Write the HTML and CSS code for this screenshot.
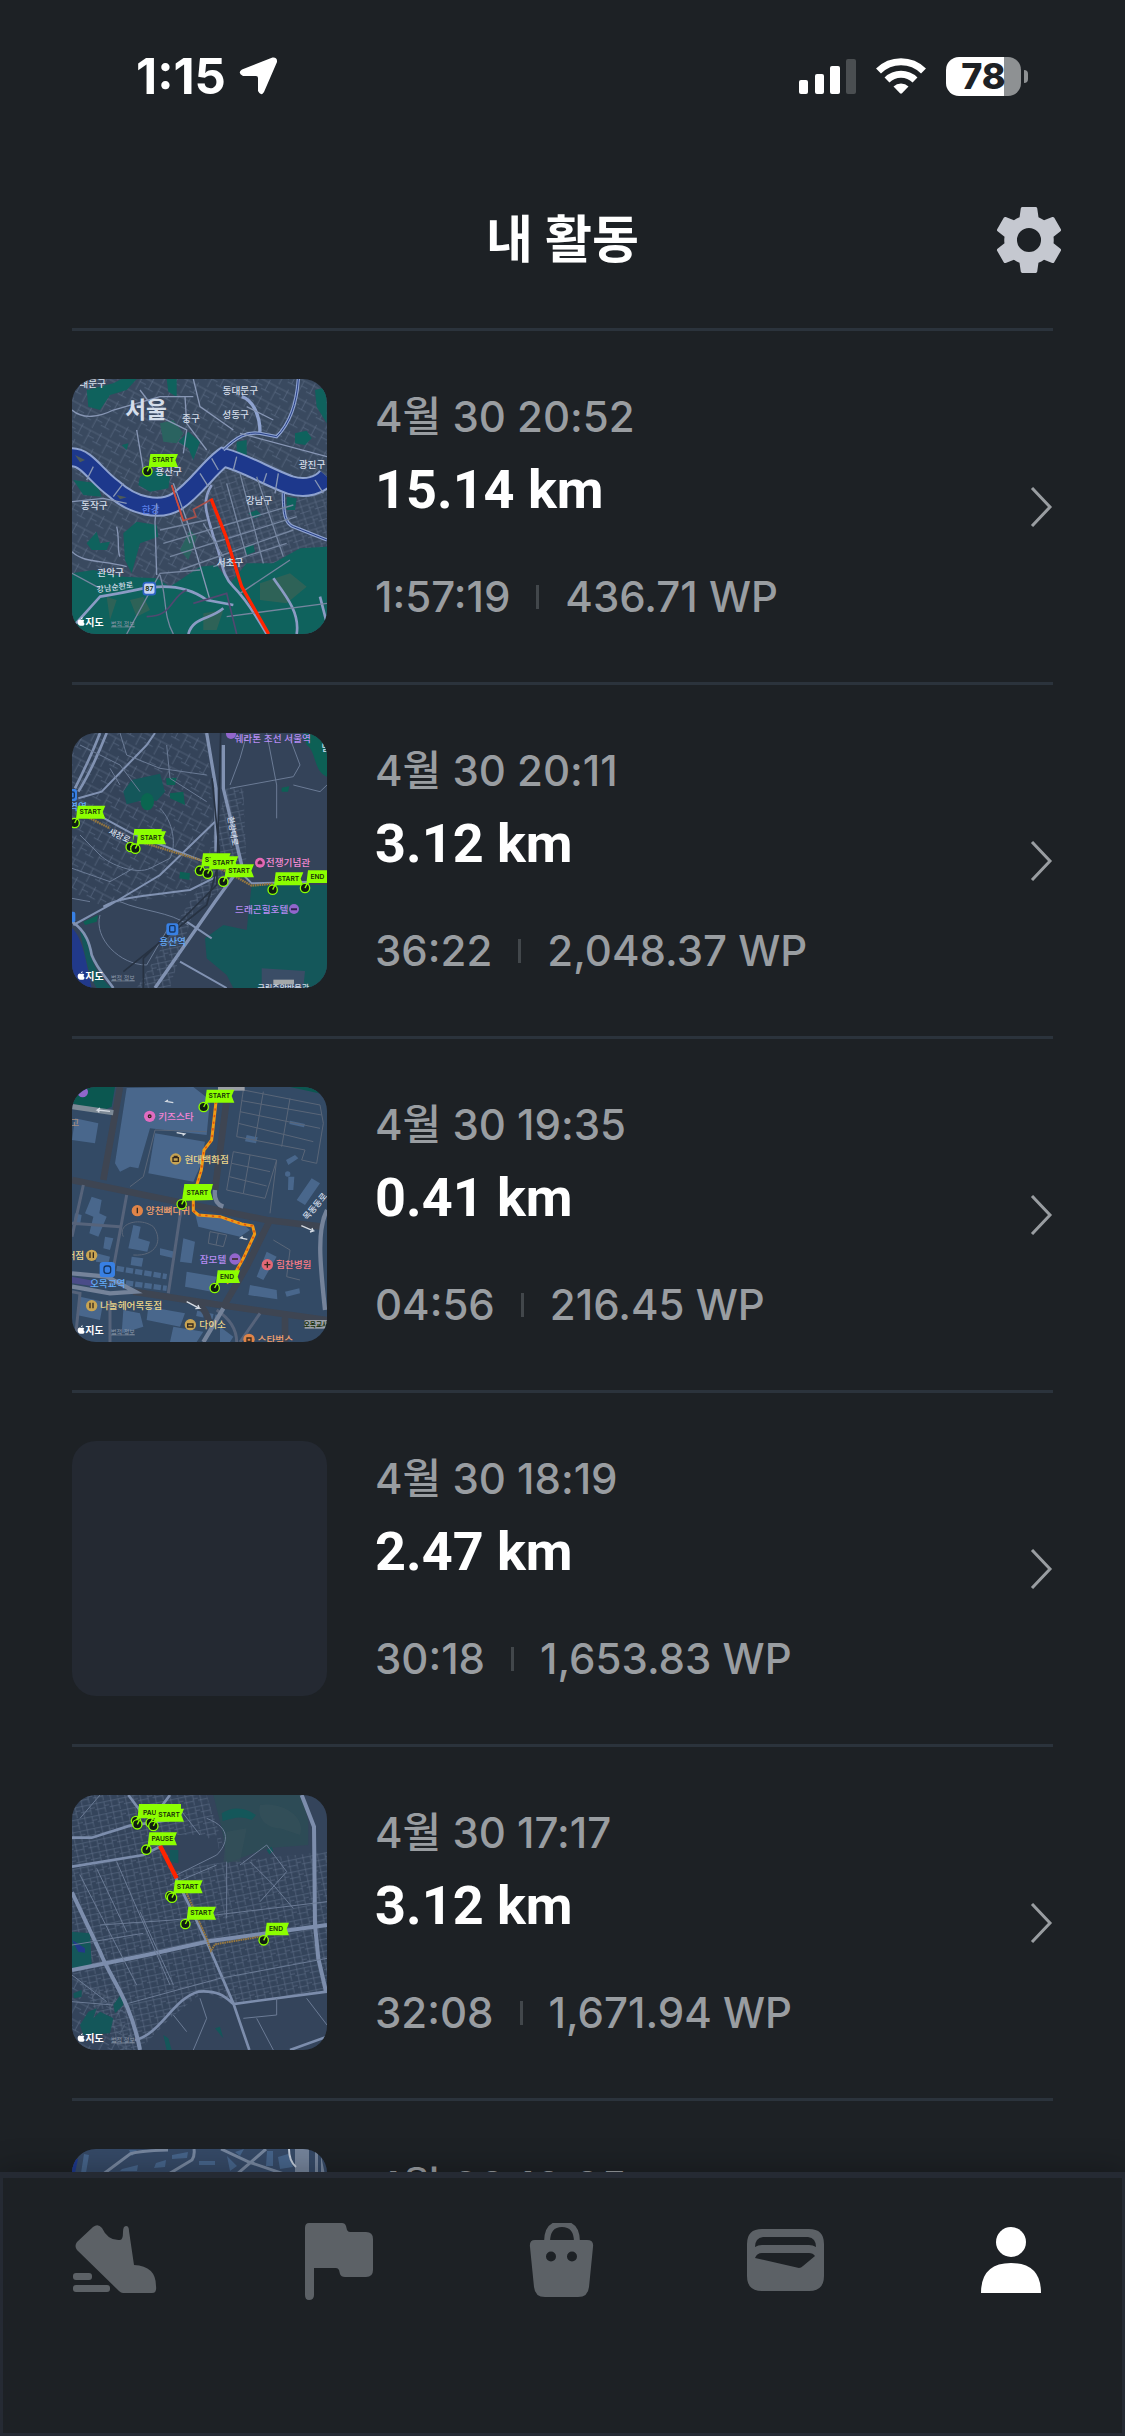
FILE: index.html
```html
<!DOCTYPE html>
<html lang="ko">
<head>
  <meta charset="UTF-8" />
  <title>내 활동</title>
  <meta name="viewport" content="width=device-width, initial-scale=1.0" />
  <link rel="stylesheet" href="styles.css">
</head>

<body>
  <!-- Shared map parts -->
  <svg class="defs" width="0" height="0" aria-hidden="true">
    <defs>
      <pattern id="streets" width="46" height="38" patternUnits="userSpaceOnUse" patternTransform="rotate(-18)">
        <path d="M0 6H46M0 25H30M9 0V38M32 6V38M32 17H46" class="street" />
      </pattern>
      <pattern id="streetsSteep" width="62" height="54" patternUnits="userSpaceOnUse" patternTransform="rotate(28)">
        <path d="M0 9H62M0 35H28M13 0V35M42 9V54M42 26H62" class="street" />
      </pattern>
      <pattern id="streetsFine" width="44" height="36" patternUnits="userSpaceOnUse" patternTransform="rotate(-12)">
        <path d="M0 5H44M0 23H30M8 0V36M30 5V36M30 16H44" class="street" />
      </pattern>
      <g id="pin">
        <circle r="14" fill="#101c12" stroke="#8cff00" stroke-width="4" />
        <path d="M0 0L6 -12" stroke="#8cff00" stroke-width="4" />
      </g>
      <g id="flag-start">
        <path d="M3 -6L9 -52H92L84 -33L92 -13H12L7 -4Z" fill="#8cff00" />
        <text x="47" y="-27" class="flag-text">START</text>
        <use href="#pin" />
      </g>
      <g id="flag-pause">
        <path d="M3 -6L9 -52H92L84 -33L92 -13H12L7 -4Z" fill="#8cff00" />
        <text x="48" y="-27" class="flag-text">PAUSE</text>
        <use href="#pin" />
      </g>
      <g id="flag-end">
        <path d="M3 -6L9 -53H76L69 -34L76 -15H12L7 -4Z" fill="#8cff00" />
        <text x="37" y="-28" class="flag-text">END</text>
        <use href="#pin" />
      </g>
      <g id="credit">
        <path d="M10 -15C4 -19 -1 -15 -1 -8C-1 -1 4 4 10 2C16 4 19 0 20 -4C16 -6 16 -11 19 -14C16 -17 13 -16 10 -15ZM9 -17C9 -21 12 -23 14 -23C14 -20 12 -17 9 -17Z" fill="#fff" />
        <text x="22" y="3" class="credit">지도</text>
        <text x="99" y="2" class="legal">법적 정보</text>
      </g>
    </defs>
  </svg>

  <div class="app">
    <!-- Status bar -->
    <div class="status-bar">
      <div class="status-time">
        <span>1:15</span>
        <svg width="40" height="40" viewBox="0 0 40 40"><path d="M34.500 1.500Q39.500 1 39 6L26 36Q23 41 20 35V22Q20 20 18 20H5Q-1 17 4 13.500Z" fill="#fff" /></svg>
      </div>
      <div class="status-icons">
        <svg width="57" height="36" viewBox="0 0 57 36" fill="#fff">
          <rect x="0" y="22" width="9" height="14" rx="2" />
          <rect x="16" y="16" width="9" height="20" rx="2" />
          <rect x="31" y="8" width="10" height="28" rx="2" />
          <rect x="47" y="1" width="10" height="35" rx="2" fill="#4a4e51" />
        </svg>
        <svg width="50" height="36" viewBox="0 0 50 36">
          <path d="M2.500 13.500A32 32 0 0 1 47.500 13.500" fill="none" stroke="#fff" stroke-width="7" transform="translate(0 -.5)" />
          <path d="M11 22A20 20 0 0 1 39 22" fill="none" stroke="#fff" stroke-width="7" />
          <path d="M17.500 28.500A11 11 0 0 1 32.500 28.500L26 35.300Q25 36 24 35.300Z" fill="#fff" />
        </svg>
        <div class="battery"><span>78</span></div>
      </div>
    </div>

    <!-- Header -->
    <header class="header">
      <h1>내 활동</h1>
      <button class="settings" type="button" aria-label="설정">
        <svg width="66" height="66" viewBox="2.4 2.4 19.2 19.2" fill="#c5c8d0">
          <path d="M19.140 12.940c.04-.3.06-.61.06-.94 0-.32-.02-.64-.07-.94l2.030-1.580c.18-.14.23-.41.12-.61l-1.920-3.320c-.12-.22-.37-.29-.59-.22l-2.390.96c-.5-.38-1.030-.7-1.620-.94l-.36-2.540c-.04-.24-.24-.41-.48-.41h-3.840c-.24 0-.43.17-.47.41l-.36 2.540c-.59.24-1.130.57-1.620.94l-2.390-.96c-.22-.08-.47 0-.59.22l-1.910 3.320c-.12.21-.08.47.12.61l2.030 1.580c-.05.3-.09.63-.09.94s.02.64.07.94l-2.030 1.580c-.18.14-.23.41-.12.61l1.920 3.320c.12.22.37.29.59.22l2.390-.96c.5.38 1.030.7 1.620.94l.36 2.540c.05.24.24.41.48.41h3.840c.24 0 .44-.17.47-.41l.36-2.540c.59-.24 1.130-.56 1.620-.94l2.390.96c.22.08.47 0 .59-.22l1.920-3.320c.12-.22.07-.47-.12-.61l-2.010-1.580zM12 15.500A3.500 3.500 0 1 1 12 8.500a3.500 3.500 0 0 1 0 7z" />
        </svg>
      </button>
    </header>

    <!-- Activity list -->
    <main class="activities">
      <a class="activity" href="#">
        <svg class="thumb" viewBox="36 27 765 765" role="img" aria-label="서울 지도">
          <rect x="36" y="27" width="765" height="765" fill="#39495f" />
          <rect x="36" y="27" width="765" height="765" fill="url(#streetsSteep)" />
          <path d="M470 300L800 370V560L520 700L440 480Z" fill="#39495f" />
          <path d="M470 300L800 370V560L520 700L440 480Z" fill="url(#streets)" />
          <g fill="#0f625d">
            <path d="M36 610L100 600L190 620L290 625L330 650L420 590L470 585L510 640L560 580L640 580L720 535L801 530V792H36Z" />
            <path d="M80 60L160 40L185 27H230L200 60L150 75L120 120L85 110Z" />
            <path d="M300 160L340 150L370 190L350 220L310 215Z" fill="#2a6360" />
            <path d="M355 215L385 185L420 215L400 270L385 235Z" />
            <path d="M240 320L290 300L330 320L325 355L270 365L235 345Z" />
            <path d="M190 490L230 455L290 465L295 500L240 520L215 610L195 570Z" />
            <path d="M360 540L390 480L410 500L385 570Z" fill="#2a6360" />
            <path d="M80 520L110 485L120 520L150 515L140 540L95 540Z" />
            <path d="M705 190L740 182L755 205L735 225L705 220Z" />
            <path d="M680 380L710 385L705 420L680 420ZM765 60L800 50V160L770 110ZM530 215L560 210V260L530 245ZM565 430L590 420L605 435L585 445ZM555 530L580 525L585 545L560 555ZM320 27H350V80L325 65ZM185 225L205 220L200 240ZM40 330L110 340L125 380L70 375Z" />
            <path d="M600 640L690 610L740 650L680 700L600 690ZM140 680L170 690L150 750ZM430 730L490 720L470 780L430 780ZM210 690L250 680L270 720L230 740Z" fill="#3c6355" opacity=".7" />
          </g>
          <!-- River -->
          <path d="M36 262C80 262 110 320 160 355C220 410 300 425 350 395C410 355 440 300 490 262C560 280 620 320 690 345C740 360 780 345 801 320" fill="none" stroke="#8ea2cf" stroke-width="60" />
          <path d="M36 262C80 262 110 320 160 355C220 410 300 425 350 395C410 355 440 300 490 262C560 280 620 320 690 345C740 360 780 345 801 320" fill="none" stroke="#1d388c" stroke-width="48" />
          <path d="M490 240C530 200 560 185 600 190L650 200C690 160 710 100 715 27M670 370C670 430 675 460 700 470L801 510M600 185C600 140 580 90 545 80" fill="none" stroke="#8ea2cf" stroke-width="10" />
          <path d="M490 240C530 200 560 185 600 190L650 200C690 160 710 100 715 27M670 370C670 430 675 460 700 470L801 510" fill="none" stroke="#263f86" stroke-width="3" />
          <path d="M45 255L75 270L60 277ZM170 375L200 382L180 388Z" fill="#4d5a58" />
          <g fill="none" stroke="#8796b4" stroke-width="5">
            <path d="M36 395L130 385L200 400M100 290L80 330M190 340L160 380M290 400L285 455L290 615M340 340L380 450L450 690M420 310L445 350M455 265L475 300M530 260L520 300M620 310L610 340M655 310L645 370M765 330L790 370M230 180L250 300M36 120C70 150 120 140 160 120L300 80H400M240 60L300 140L380 180L370 250M400 27L420 110L520 180M375 80L380 160L440 240M540 190L801 260M560 110L640 150M36 545C70 580 130 570 200 590M170 470C180 510 170 540 180 560" stroke-width="4" />
            <path d="M455 345C420 400 445 440 460 500C490 570 480 610 520 650C560 690 590 740 620 792M48 760L120 680Q180 670 250 655C340 640 400 660 440 690L520 705M640 625C680 680 720 730 710 792M385 792C400 740 450 750 490 715M780 680L798 750" stroke-width="8" stroke="#8b9bc4" />
            <path d="M300 480L440 450M310 520L700 405M330 560L710 440M360 600L700 480M460 590L680 520M360 440L390 520M430 460L490 560M540 310L610 580M590 320L670 560M500 340L560 560M540 670L690 570M200 792L300 610L420 600M300 615C320 680 310 740 340 792M500 740L801 700M120 655L36 610" stroke-width="4" stroke="#75859f" />
            <path d="M380 660C330 680 340 740 260 740M400 700L500 670L530 792" stroke="#514870" stroke-width="5" />
          </g>
          <path d="M335 345L370 452L408 440L400 418L455 388" fill="none" stroke="#a8504a" stroke-width="5" />
          <path d="M335 345L370 452" stroke="#cf4a3c" stroke-width="5" />
          <path d="M453 386L498 500L545 650L626 792" fill="none" stroke="#ff2400" stroke-width="10" />
          <text x="258" y="145" class="label city">서울</text>
          <g class="label">
            <text x="98" y="50">대문구</text>
            <text x="541" y="72">동대문구</text>
            <text x="393" y="156">중구</text>
            <text x="527" y="144">성동구</text>
            <text x="756" y="293">광진구</text>
            <text x="326" y="314">용산구</text>
            <text x="103" y="418">동작구</text>
            <text x="597" y="402">강남구</text>
            <text x="510" y="587">서초구</text>
            <text x="152" y="617">관악구</text>
            <text x="166" y="660" font-size="24" transform="rotate(-8 166 660)">강남순환로</text>
            <text x="272" y="428" fill="#5c80e8">한강</text>
          </g>
          <rect x="250" y="638" width="36" height="36" rx="8" fill="#c4d4f4" stroke="#2c62c4" stroke-width="5" />
          <text x="268" y="664" class="flag-text">87</text>
          <use href="#flag-start" x="262" y="304" />
          <use href="#credit" x="54" y="765" />
        </svg>
        <div class="info">
          <time class="date">4월 30 20:52</time>
          <strong class="distance">15.14 km</strong>
          <p class="stats"><span>1:57:19</span><i></i><span>436.71 WP</span></p>
        </div>
        <svg class="chevron" viewBox="0 0 24 40"><path d="M3 1L21 20L3 39" /></svg>
      </a>

      <a class="activity" href="#">
        <svg class="thumb" viewBox="36 24 765 765" role="img" aria-label="용산 지도">
          <rect x="36" y="24" width="765" height="765" fill="#344359" />
          <path d="M36 24H440L460 290L380 510L120 540L36 500Z" fill="url(#streetsSteep)" />
          <path d="M500 190L550 190L560 430L400 560L330 789H230L420 480Z" fill="url(#streetsFine)" />
          <g fill="#14575a">
            <path d="M190 200L215 165L300 146L315 200L290 228L250 225L200 238Z" />
            <path d="M575 480H801V789H520L500 750L440 700L435 640L490 600L560 615Z" />
            <path d="M730 24H801V155C760 140 770 80 740 60Z" fill="#0d6055" />
            <path d="M318 160L350 158L345 180L320 180ZM330 205L370 200L375 240L330 220ZM360 440L390 445L388 465L358 460ZM665 188L688 184L684 200L665 200ZM70 590L115 570L110 590L75 600Z" fill="#0d6055" />
            <ellipse cx="262" cy="230" rx="20" ry="26" fill="#0a6650" />
          </g>
          <path d="M605 730L735 738L730 789H605Z" fill="#3a4d66" />
          <path d="M36 610C70 640 80 720 95 789H36Z" fill="#21398a" />
          <path d="M60 620C75 680 80 740 110 789H155C100 740 90 690 75 620Z" fill="#14575a" />
          <g fill="none" stroke="#8192b2">
            <path d="M440 24L468 190V380M490 60V190L545 420L465 530L285 789" stroke-width="10" />
            <path d="M140 24C110 100 80 160 55 200M120 24C95 90 70 140 45 190M36 590C80 620 90 660 95 690C110 730 140 760 160 789" stroke-width="8" />
            <path d="M55 220L125 200L260 60L285 24M100 262L215 325L420 405L545 445L575 475L760 470M40 600L150 540L300 450L465 290M130 545C180 515 280 510 390 495L470 455M360 710L500 789M380 590L455 640" stroke-width="6" />
            <path d="M120 570C100 640 180 720 260 720L330 600M180 530C250 560 330 560 385 600M36 520L90 530M510 190L700 155L720 120L690 40M620 24L650 180V280M560 30L540 100L510 180M700 180L780 200L801 180M300 250C340 290 350 360 330 400L270 430C230 450 150 420 120 390L60 330M36 430L150 470L220 430M60 60L180 120L240 200M180 24L200 90L300 130L440 150M320 60L330 160L440 230M150 130L180 180" stroke-width="3" stroke="#6b7b95" />
          </g>
          <path d="M482 24L470 480L250 700V789M456 160L480 400L440 540L190 740" fill="none" stroke="#273242" stroke-width="5" />
          <path d="M80 275L150 310M240 350L430 408L500 440L575 482L640 476" fill="none" stroke="#96773f" stroke-width="7" stroke-dasharray="5 2" />
          <g class="label">
            <text x="638" y="52" fill="#b68cf2">쉐라톤 조선 서울역</text>
            <text x="684" y="423" fill="#f48ad2">전쟁기념관</text>
            <text x="605" y="563" fill="#b68cf2">드래곤힐호텔</text>
            <text x="338" y="660" fill="#64aaf8">용산역</text>
            <text x="54" y="256" fill="#64aaf8">역역</text>
            <text x="175" y="340" font-size="25" transform="rotate(25 175 340)">새창로</text>
            <text x="518" y="326" font-size="24" transform="rotate(80 518 318)">한강대로</text>
            <text x="798" y="77">남</text>
            <text x="670" y="799" font-size="24">국립중앙박물관</text>
          </g>
          <circle cx="513" cy="27" r="15" fill="#9266cc" />
          <circle cx="600" cy="413" r="15" fill="#e468b4" />
          <path d="M593 418V411L600 405L607 411V418Z" fill="#502848" />
          <circle cx="702" cy="552" r="15" fill="#9266cc" />
          <path d="M693 553H711" stroke="#302050" stroke-width="6" />
          <rect x="319" y="595" width="36" height="36" rx="7" fill="#3880e4" />
          <rect x="329" y="602" width="16" height="19" rx="3" fill="none" stroke="#143460" stroke-width="4" />
          <rect x="26" y="192" width="25" height="36" rx="7" fill="#3880e4" />
          <rect x="31" y="201" width="12" height="18" rx="4" fill="none" stroke="#143460" stroke-width="4" />
          <rect x="26" y="560" width="20" height="32" rx="6" fill="#3880e4" />
          <rect x="640" y="764" width="62" height="14" fill="#a4a8aa" />
          <use href="#flag-start" x="44" y="294" />
          <use href="#pin" x="212" y="366" />
          <path d="M217 358L223 312H305V330H223Z" fill="#8cff00" />
          <use href="#flag-start" x="226" y="371" />
          <use href="#flag-start" x="420" y="437" />
          <use href="#flag-start" x="443" y="446" />
          <use href="#flag-start" x="490" y="470" />
          <use href="#flag-start" x="638" y="494" />
          <use href="#flag-end" x="735" y="489" />
          <use href="#credit" x="54" y="762" />
        </svg>
        <div class="info">
          <time class="date">4월 30 20:11</time>
          <strong class="distance">3.12 km</strong>
          <p class="stats"><span>36:22</span><i></i><span>2,048.37 WP</span></p>
        </div>
        <svg class="chevron" viewBox="0 0 24 40"><path d="M3 1L21 20L3 39" /></svg>
      </a>

      <a class="activity" href="#">
        <svg class="thumb" viewBox="36 21 765 765" role="img" aria-label="목동 지도">
          <rect x="36" y="21" width="765" height="765" fill="#334a65" />
          <path d="M36 21H165L155 80L120 95L36 70ZM690 21H801V45Z" fill="#0b5750" />
          <!-- Buildings -->
          <g fill="#49678c">
            <path d="M200 24L400 21L450 60L440 165L270 145L235 265L210 260L180 275L165 250Z" />
            <path d="M285 160L435 185L420 260L400 305L265 280Z" />
            <path d="M45 115L115 130L105 190L36 180ZM560 165L593 172L588 190L555 184ZM690 122L735 132L732 142L688 132ZM678 240L705 225L715 235L685 255ZM755 295L780 310L735 375L710 360ZM685 290L703 290L700 330L684 330Z" />
            <circle cx="683" cy="282" r="8" />
            <path d="M95 350L125 360L118 400L140 410L115 470L88 460L100 410L75 400ZM220 435L242 440L235 475L270 485L262 515L205 505ZM135 470L160 475L150 510L130 505ZM370 475L405 485L395 550L360 545ZM215 530L250 535L245 560L212 555ZM300 505L345 515L342 535L300 525ZM405 400L540 425L570 450L540 470L415 440ZM380 575L470 590L455 635L375 620ZM110 520L150 530L145 550L108 545ZM45 400L65 405L60 435L40 430ZM620 515L650 530L610 600L590 590ZM570 615L650 630L652 658L565 645ZM675 635L718 625L720 640L680 650ZM60 650L130 665L120 720L50 705ZM190 690L240 700L250 740L185 760ZM265 680L375 700L360 740L260 720ZM340 740L430 755L410 786H330ZM480 740L520 770L510 786H480Z" />
            <path d="M170 565L320 590M170 605L320 625M410 700L470 712" stroke="#49678c" stroke-width="16" stroke-dasharray="22 6" />
          </g>
          <!-- Parking lots -->
          <g fill="none" stroke="#5a6678" stroke-width="3">
            <path d="M550 30L780 75L790 130L770 250L725 240L735 210L530 170ZM545 62L785 105M540 95L780 145M535 130L760 185M520 215L650 240L615 355L500 330ZM515 250L630 275M508 290L620 318M570 225L550 340M610 35L585 180M690 55L665 200M650 240L630 400M440 155L285 150L250 290L210 320M190 470C170 430 240 410 280 440C310 480 290 530 220 525M450 455L500 465L490 500L445 490ZM475 460L468 495M640 480L690 510L680 590L720 600" />
          </g>
          <!-- Roads -->
          <g fill="none" stroke="#3e4552" stroke-width="20">
            <path d="M36 300L300 355L620 420L785 440M180 21L130 300M505 21L465 330M630 420L560 560L490 680M220 635L480 675L801 720M380 660Q440 670 450 740M675 710V786" />
          </g>
          <g fill="none" stroke="#56637a" stroke-width="9">
            <path d="M70 315L36 470M200 345L150 620M365 375L325 640M36 430L180 440M36 635L60 640L45 786M150 660V786M600 700L540 786M470 690Q530 730 530 786" />
            <path d="M36 580L140 590L225 635L150 640L36 620M490 685L430 786M465 330Q460 370 490 380M801 390C770 450 780 550 795 690" stroke="#75839a" stroke-width="13" />
            <path d="M36 80L160 98" stroke="#7d8a96" stroke-width="16" />
          </g>
          <path d="M36 590L100 602L95 618L36 610Z" fill="#4a4c88" />
          <path d="M150 94L112 90L120 84M112 90L118 97M724 437L760 453L750 456M760 453L756 444M380 665L418 685L406 686M418 685L414 675M340 68L318 64L324 60M350 158L374 162L368 166M562 478L542 474L548 470" fill="none" stroke="#d4dae2" stroke-width="4" />
          <path d="M468 65L463 110L455 180L432 210L424 270L400 350V392L415 405L480 410L545 432L578 438L584 462L550 535L524 582L500 610" fill="none" stroke="#f09a16" stroke-width="9" stroke-linejoin="round" />
          <path d="M468 65L463 110L455 180L432 210L424 270L400 350V392L415 405L480 410L545 432L578 438L584 462L550 535L524 582" fill="none" stroke="#e0560e" stroke-width="5" stroke-dasharray="7 13" />
          <g class="poi">
            <circle cx="269" cy="109" r="17" fill="#e06cc0" />
            <circle cx="347" cy="237" r="17" fill="#c8a452" />
            <circle cx="232" cy="392" r="17" fill="#e08448" />
            <circle cx="95" cy="526" r="17" fill="#c8a452" />
            <circle cx="525" cy="537" r="17" fill="#9266cc" />
            <circle cx="622" cy="554" r="17" fill="#e26876" />
            <circle cx="95" cy="677" r="17" fill="#c8a452" />
            <circle cx="391" cy="734" r="17" fill="#c8a452" />
            <circle cx="567" cy="778" r="17" fill="#e08448" />
            <circle cx="68" cy="36" r="16" fill="#9266cc" />
          </g>
          <rect x="119" y="546" width="46" height="46" rx="10" fill="#3880e4" />
          <g fill="none" stroke="#33281e" stroke-width="4">
            <circle cx="269" cy="109" r="4" />
            <path d="M339 233H355V244H339ZM343 233V229H351V233M232 383V400M90 517V534M100 517V534M516 537H534M613 554H631M622 545V563M90 668V685M99 668V685M383 732H399V741H383ZM561 774H573V784H561Z" />
            <rect x="132" y="558" width="20" height="22" rx="7" stroke="#143460" />
          </g>
          <g class="label">
            <text x="348" y="120" fill="#f484d6">키즈스타</text>
            <text x="440" y="248" fill="#ecd58a">현대백화점</text>
            <text x="324" y="403" fill="#f4a06c">양천뼈다귀</text>
            <text x="46" y="536" fill="#ecd58a">서점</text>
            <text x="459" y="548" fill="#b68cf2">잠모텔</text>
            <text x="701" y="565" fill="#fa7c88">힘찬병원</text>
            <text x="143" y="622" fill="#64aaf8">오목교역</text>
            <text x="213" y="688" fill="#ecd58a">나눌헤어목동점</text>
            <text x="458" y="745" fill="#ecd58a">다이소</text>
            <text x="646" y="789" fill="#f4a06c">스타벅스</text>
            <text x="44" y="137" fill="#a08c80">고</text>
            <text x="766" y="388" font-size="26" transform="rotate(-50 766 380)">목동동로</text>
          </g>
          <rect x="734" y="720" width="70" height="26" fill="#9a9ea6" />
          <text x="768" y="740" class="flag-text">오목교사</text>
          <rect x="474" y="18" width="80" height="14" fill="#9a9ea6" />
          <use href="#flag-start" x="431" y="81" />
          <path d="M365 368L373 312H459L452 336L459 360L375 362Z" fill="#8cff00" />
          <use href="#flag-start" x="365" y="373" />
          <use href="#flag-end" x="464" y="624" />
          <use href="#credit" x="54" y="759" />
        </svg>
        <div class="info">
          <time class="date">4월 30 19:35</time>
          <strong class="distance">0.41 km</strong>
          <p class="stats"><span>04:56</span><i></i><span>216.45 WP</span></p>
        </div>
        <svg class="chevron" viewBox="0 0 24 40"><path d="M3 1L21 20L3 39" /></svg>
      </a>

      <a class="activity" href="#">
        <div class="thumb"></div>
        <div class="info">
          <time class="date">4월 30 18:19</time>
          <strong class="distance">2.47 km</strong>
          <p class="stats"><span>30:18</span><i></i><span>1,653.83 WP</span></p>
        </div>
        <svg class="chevron" viewBox="0 0 24 40"><path d="M3 1L21 20L3 39" /></svg>
      </a>

      <a class="activity" href="#">
        <svg class="thumb" viewBox="36 30 765 765" role="img" aria-label="강남 지도">
          <rect x="36" y="30" width="765" height="765" fill="#34445b" />
          <path d="M36 30H440L490 180L420 240L801 200V620L520 655L430 620L330 700L240 795H180L36 560Z" fill="url(#streetsFine)" />
          <path d="M300 230L350 200L470 150L480 220L360 260ZM290 150H440V240H340Z" fill="#34445b" />
          <path d="M36 580L180 620L230 795H36Z" fill="url(#streetsSteep)" />
          <path d="M460 30H725L745 110V180L620 190L500 235L490 150Z" fill="#2d4b56" />
          <path d="M600 60C660 50 740 90 720 150L660 130C620 130 590 100 600 60ZM500 140L560 130L540 230H490Z" fill="#35505a" opacity=".6" />
          <g fill="#14575a">
            <path d="M485 85C520 60 560 70 588 90L575 105C540 90 520 100 488 108Z" />
            <path d="M36 440L90 445L95 540L36 555ZM330 195L355 195V235L330 230ZM620 195L635 185L640 198L628 208ZM60 720L85 680L110 670L100 700L120 680L160 700L150 745L70 750ZM160 660L185 625L190 660L165 685ZM40 625L65 615L65 635L42 640ZM465 730L480 725L490 760ZM310 750L325 760L335 795H320Z" />
          </g>
          <path d="M36 465L75 490V503L55 500Z" fill="#21398a" />
          <g fill="none" stroke="#7c8dac">
            <path d="M36 322L120 500C150 580 210 640 240 795M725 30L762 125L765 420L775 520L798 620" stroke-width="12" />
            <path d="M36 555L260 510L450 468L801 420" stroke-width="12" />
            <path d="M36 158H95L210 122L330 105M205 30L250 90M330 30L300 70M36 245L250 210L300 185M300 180L440 470L520 655L568 795M225 765C300 750 340 640 415 620C480 615 500 640 520 657L801 620M690 795L801 755" stroke-width="8" />
            <path d="M205 655L480 580L801 520M120 420L340 405L801 350M140 650L36 570M36 480L250 445M240 380L340 600M170 230L330 600M110 250L200 440M650 640V690L550 700M740 640L801 720M420 640L440 700L400 795M590 700L640 795M36 650L160 660M340 690L380 740M60 270L230 600M330 300L470 240M500 230V400M440 100C520 130 500 180 470 210L350 270M60 100L120 30M350 60L420 150M570 230L640 300L700 370M540 240L620 180L680 260L600 350" stroke-width="3" stroke="#6b7b95" />
          </g>
          <path d="M300 182L350 280" stroke="#ff2400" stroke-width="13" />
          <path d="M380 325L440 460L453 497L465 478L600 455" fill="none" stroke="#96773f" stroke-width="6" stroke-dasharray="5 2" />
          <use href="#pin" x="228" y="108" />
          <use href="#pin" x="232" y="118" />
          <path d="M232 105L237 57H363V100H240Z" fill="#8cff00" />
          <text x="269" y="90" class="flag-text">PAU</text>
          <use href="#pin" x="272" y="113" />
          <use href="#flag-start" x="280" y="123" />
          <use href="#flag-pause" x="259" y="194" />
          <use href="#pin" x="331" y="333" />
          <use href="#flag-start" x="336" y="338" />
          <use href="#flag-start" x="376" y="417" />
          <use href="#flag-end" x="611" y="466" />
          <use href="#credit" x="54" y="768" />
        </svg>
        <div class="info">
          <time class="date">4월 30 17:17</time>
          <strong class="distance">3.12 km</strong>
          <p class="stats"><span>32:08</span><i></i><span>1,671.94 WP</span></p>
        </div>
        <svg class="chevron" viewBox="0 0 24 40"><path d="M3 1L21 20L3 39" /></svg>
      </a>

      <a class="activity" href="#">
        <svg class="thumb" viewBox="0 0 255 255" role="img" aria-label="지도">
          <rect width="255" height="255" fill="#354966" />
          <path d="M0 8L6 10L3 24H0Z" fill="#1d388c" />
          <path d="M12 5L17 6L14 24H9ZM57 1H65L60 7ZM100 6L116 3L115 9L100 10ZM84 14L94 11L93 18L82 19ZM50 20L66 16L65 22H48ZM127 12H143V16H127ZM155 7L165 17L158 22ZM195 2H201V17H194ZM163 3L172 0L168 7ZM206 8L216 5L221 18L208 20Z" fill="#46648a" />
          <path d="M30 26L58 5Q65 2 96 1M95 26L120 11Q123 6 122 0M149 0L177 13L215 26M164 26L194 0" fill="none" stroke="#76869e" stroke-width="3" />
          <path d="M223 0H237V26H223ZM243 3H246V26H243ZM249 6L253 26H249Z" fill="#74839a" />
          <path d="M217 0Q217 12 224 18" fill="none" stroke="#c0cad8" stroke-width="2" />
        </svg>
        <div class="info">
          <time class="date">4월 30 16:05</time>
        </div>
      </a>
    </main>

    <!-- Tab bar -->
    <nav class="tab-bar">
      <a href="#" aria-label="운동">
        <svg viewBox="0 0 84 78">
          <path d="M4 27Q1 23 4 19L20 4Q25 0 29 5Q35 18 47 17Q50 17 50 9Q50 3 53 3Q56 3 56 8L61 42Q83 43 83 63Q84 70 79 70H50Q48 70 46 68Z" />
          <rect x="0" y="50" width="19" height="7" rx="3" />
          <rect x="0" y="62" width="37" height="7" rx="3" />
        </svg>
      </a>
      <a href="#" aria-label="챌린지">
        <svg viewBox="0 0 84 78">
          <path d="M12 0H45Q48 0 49 3L50 7Q51 9 53 9H69Q76 9 76 16V47Q76 54 69 54H48Q44 54 43 51L42 47Q41 45 39 45H17V72Q17 77 12 77Q8 77 8 72V5Q8 0 12 0Z" />
        </svg>
      </a>
      <a href="#" aria-label="상점">
        <svg viewBox="0 0 84 78">
          <path d="M27 19Q27 1 42 1Q57 1 57 19" fill="none" stroke="#5c6166" stroke-width="6" />
          <path fill-rule="evenodd" d="M15 17H67Q74 17 73 24L69 64Q68 74 58 74H25Q15 74 14 64L10 24Q9 17 15 17ZM31 28.500A5 5 0 1 0 31 38.500A5 5 0 1 0 31 28.500ZM52 28.500A5 5 0 1 0 52 38.500A5 5 0 1 0 52 28.500Z" />
        </svg>
      </a>
      <a href="#" aria-label="지갑">
        <svg viewBox="0 0 84 78">
          <path fill-rule="evenodd" d="M18 6H65Q80 6 80 21V53Q80 68 65 68H18Q3 68 3 53V21Q3 6 18 6ZM19 14Q11 15 11 24Q14 22 18 22H65Q69 22 72 24Q72 15 64 14ZM18 30Q13 30 11 35L55 45Q57 45 59 43L71 33Q69 30 65 30Z" />
        </svg>
      </a>
      <a class="active" href="#" aria-label="내 활동">
        <svg viewBox="0 0 84 78">
          <circle cx="43" cy="19" r="15" />
          <path d="M13 70Q13 40 43 40T73 70Z" />
        </svg>
      </a>
    </nav>
  </div>
</body>
</html>
```

FILE: styles.css
```css
/* =============== BASE =============== */
* {
  box-sizing: border-box;
}
html,
body {
  margin: 0;
  padding: 0;
  height: 100%;
  background: #1d2125;
  color: #fff;
  font-family: "Inter", "Noto Sans CJK KR", sans-serif;
}
a {
  color: inherit;
  text-decoration: none;
}
.defs {
  position: absolute;
}
.app {
  display: flex;
  flex-direction: column;
  height: 100vh;
}

/* =============== STATUS BAR =============== */
.status-bar {
  display: flex;
  flex-shrink: 0;
  justify-content: space-between;
  align-items: center;
  height: 152px;
  padding: 0 96px 0 136px;
}
.status-time {
  display: flex;
  align-items: center;
  gap: 12px;
  font-size: 49px;
  font-weight: 700;
}
.status-icons {
  display: flex;
  align-items: center;
  gap: 20px;
}
.battery {
  position: relative;
  width: 75px;
  height: 39px;
  margin-right: 8px;
  border-radius: 13px;
  background: linear-gradient(to right, #fff 58px, #8e9193 58px);
  color: #1d2125;
  font-size: 36px;
  font-weight: 800;
  line-height: 39px;
  text-align: center;
}
.battery::after {
  content: "";
  position: absolute;
  left: 78px;
  top: 13px;
  width: 4px;
  height: 13px;
  border-radius: 0 4px 4px 0;
  background: #8e9193;
}

/* =============== HEADER =============== */
.header {
  display: grid;
  grid-template-columns: 66px 1fr 66px;
  flex-shrink: 0;
  align-items: center;
  height: 176px;
  padding: 0 63px;
}
.header h1 {
  grid-column: 2;
  margin: 0;
  font-size: 51px;
  font-weight: 700;
  line-height: 64px;
  text-align: center;
}
.settings {
  display: flex;
  padding: 0;
  border: 0;
  background: none;
  cursor: pointer;
}

/* =============== ACTIVITY LIST =============== */
.activities {
  flex: 1;
  min-height: 0;
  padding: 0 72px;
  overflow-y: auto;
  scrollbar-width: none;
}
.activity {
  display: flex;
  gap: 48px;
  padding: 48px 0;
  border-top: 3px solid #2b333c;
}
.thumb {
  flex: none;
  width: 255px;
  height: 255px;
  border-radius: 24px;
  background: #242932;
}
.info {
  display: flex;
  flex: 1;
  flex-direction: column;
  padding-top: 10px;
}
.date,
.stats {
  color: #999da1;
  font-size: 42px;
  font-weight: 500;
  line-height: 56px;
}
.distance {
  margin: 13px 0 47px;
  font-family: "Roboto", "Noto Sans CJK KR", sans-serif;
  font-size: 54px;
  font-weight: 700;
  line-height: 64px;
}
.stats {
  display: flex;
  align-items: center;
  gap: 26px;
  margin: 0;
}
.stats i {
  width: 3px;
  height: 24px;
  background: #42474b;
}
.chevron {
  align-self: center;
  width: 24px;
  height: 40px;
  fill: none;
  stroke: #999da1;
  stroke-width: 3;
}

/* =============== MAP TEXT =============== */
.street {
  fill: none;
  stroke: #65758f;
  stroke-width: 2;
  opacity: 0.75;
}
.label {
  fill: #d5deea;
  font-family: "Noto Sans CJK KR", sans-serif;
  font-size: 29px;
  font-weight: 500;
  text-anchor: middle;
}
.city {
  font-size: 68px;
  font-weight: 700;
}
.flag-text {
  fill: #16300a;
  font-size: 20px;
  font-weight: 600;
  text-anchor: middle;
}
.credit {
  fill: #fff;
  font-size: 30px;
  font-weight: 700;
}
.legal {
  fill: #8b97a8;
  font-size: 18px;
  text-decoration: underline;
}

/* =============== TAB BAR =============== */
.tab-bar {
  position: relative;
  display: grid;
  grid-template-columns: repeat(5, 1fr);
  flex-shrink: 0;
  height: 264px;
  padding-top: 45px;
  border: 3px solid #252a33;
  border-top-width: 6px;
  background: #1d2125;
  box-shadow: 0 0 30px rgba(0, 0, 0, 0.3);
}
.tab-bar a {
  display: flex;
  justify-content: center;
  align-items: flex-start;
}
.tab-bar svg {
  width: 84px;
  height: 78px;
  fill: #5c6166;
}
.tab-bar .active svg {
  fill: #fff;
}
```
